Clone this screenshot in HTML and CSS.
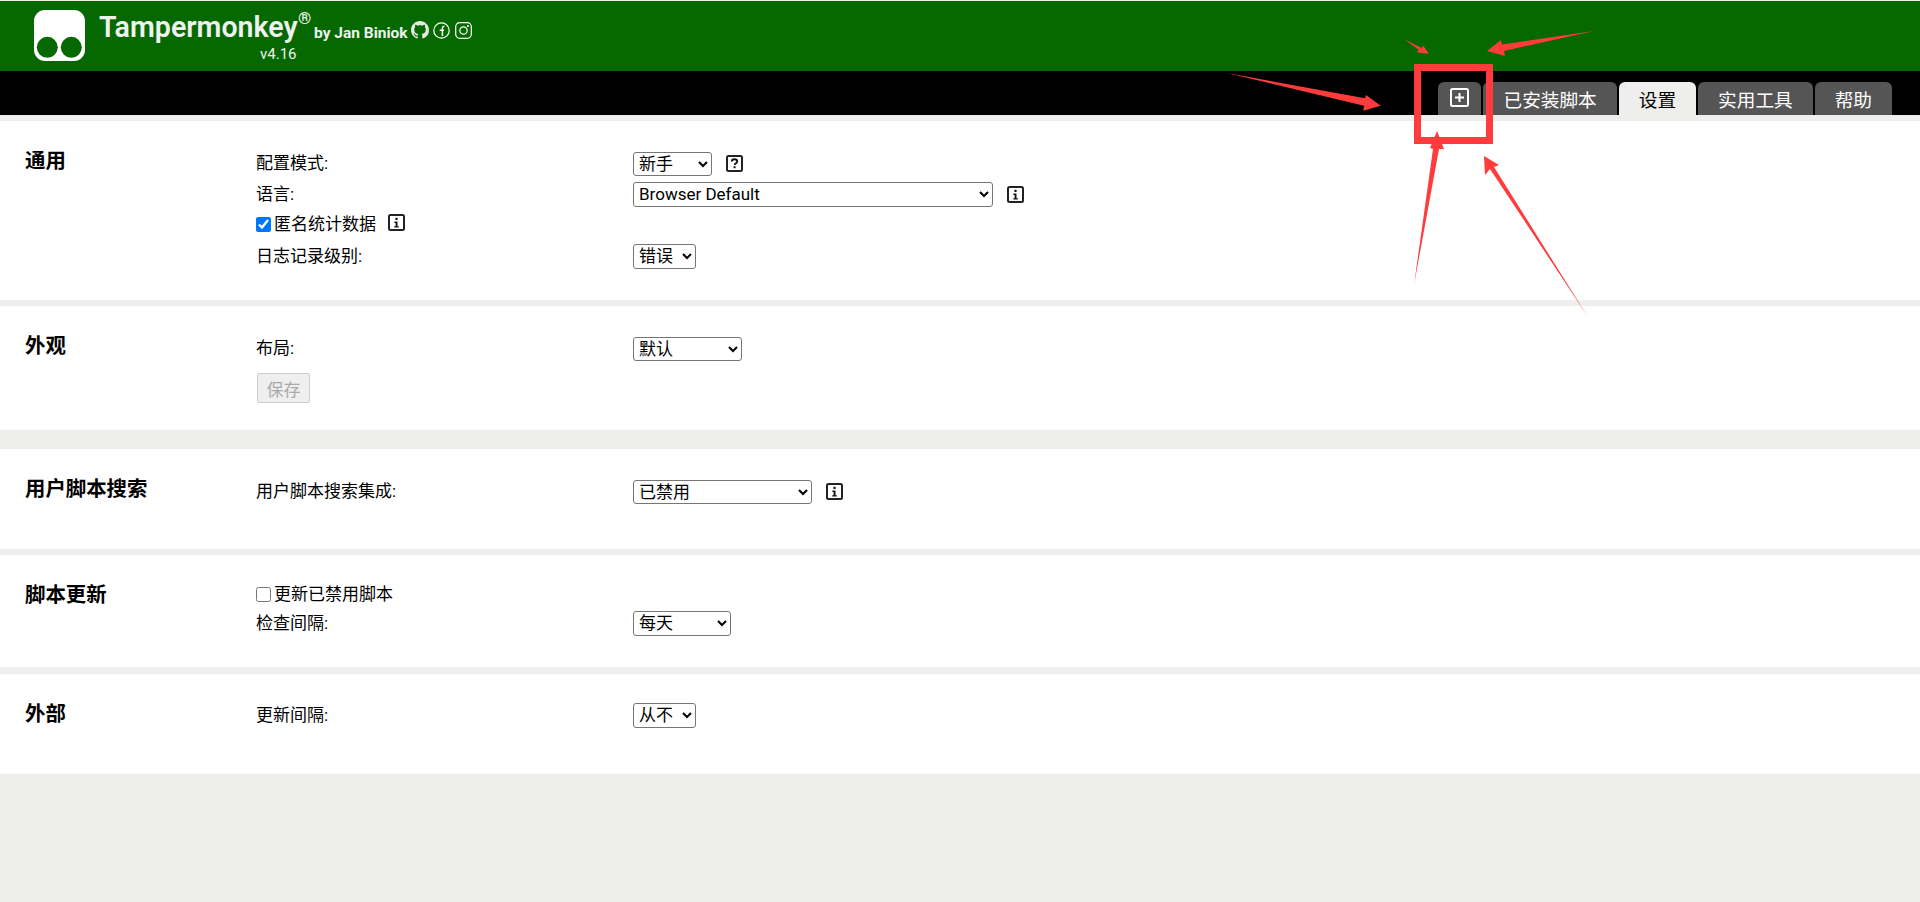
FILE: index.html
```html
<!DOCTYPE html>
<html lang="zh-CN">
<head>
<meta charset="utf-8">
<title>Tampermonkey 设置</title>
<link rel="stylesheet" href="styles.css">
</head>
<body>
<header class="brand">
  <svg class="logo" viewBox="0 0 51 51" aria-hidden="true">
    <rect width="51" height="51" rx="11" fill="#fff"/>
    <circle cx="13.3" cy="37.3" r="10.5" fill="#056800"/>
    <circle cx="37.3" cy="37.3" r="10.5" fill="#056800"/>
  </svg>
  <div class="brand-text">
    <div class="brand-line">
      <span class="brand-name">Tampermonkey<sup class="reg">®</sup></span>
      <span class="brand-by">by Jan Biniok</span>
      <svg class="social social-gh" viewBox="0 0 16 16" aria-hidden="true"><path fill="#e4e9e4" d="M8 0C3.58 0 0 3.58 0 8c0 3.54 2.29 6.53 5.47 7.59.4.07.55-.17.55-.38 0-.19-.01-.82-.01-1.49-2.01.37-2.53-.49-2.69-.94-.09-.23-.48-.94-.82-1.13-.28-.15-.68-.52-.01-.53.63-.01 1.08.58 1.23.82.72 1.21 1.87.87 2.33.66.07-.52.28-.87.51-1.07-1.78-.2-3.64-.89-3.64-3.95 0-.87.31-1.59.82-2.15-.08-.2-.36-1.02.08-2.12 0 0 .67-.21 2.2.82.64-.18 1.32-.27 2-.27.68 0 1.36.09 2 .27 1.53-1.04 2.2-.82 2.2-.82.44 1.1.16 1.92.08 2.12.51.56.82 1.27.82 2.15 0 3.07-1.87 3.75-3.65 3.95.29.25.54.73.54 1.48 0 1.07-.01 1.93-.01 2.2 0 .21.15.46.55.38A8.013 8.013 0 0016 8c0-4.42-3.58-8-8-8z"/></svg>
      <svg class="social" viewBox="0 0 17 17" aria-hidden="true"><circle cx="8.5" cy="8.5" r="7.7" fill="none" stroke="#fff" stroke-width="1.2"/><path fill="none" stroke="#fff" stroke-width="1.5" d="M9.4 14V6.5c0-1.5.7-2.2 2-2.2M6.7 8.3h4.2"/></svg>
      <svg class="social" viewBox="0 0 17 17" aria-hidden="true"><rect x=".7" y=".7" width="15.6" height="15.6" rx="4" fill="none" stroke="#fff" stroke-width="1.2"/><circle cx="8.5" cy="8.5" r="3.7" fill="none" stroke="#fff" stroke-width="1.2"/><circle cx="13" cy="4" r="1" fill="#fff"/></svg>
    </div>
    <div class="brand-version">v4.16</div>
  </div>
</header>

<nav class="tabs">
  <div class="tab tab-add">
    <svg class="add-icon" viewBox="0 0 19 19" aria-hidden="true"><rect x="1" y="1" width="17" height="17" rx="1.5" fill="none" stroke="#fff" stroke-width="2"/><path d="M9.5 5v9M5 9.5h9" stroke="#fff" stroke-width="2"/></svg>
  </div>
  <div class="tab">已安装脚本</div>
  <div class="tab tab-active">设置</div>
  <div class="tab">实用工具</div>
  <div class="tab">帮助</div>
</nav>

<main class="content">
  <section class="section">
    <h2 class="section-title">通用</h2>
    <div class="section-body">
      <div class="row">
        <label class="row-label">配置模式:</label>
        <select class="w-79 h-24"><option>新手</option></select>
        <svg class="hint" viewBox="0 0 17 17" aria-hidden="true"><rect x="1" y="1" width="15" height="15" rx="1.5" fill="none" stroke="#222" stroke-width="2"/><path d="M5.8 6.6c0-1.6 1.2-2.3 2.7-2.3s2.7.8 2.7 2.2c0 1.8-2.5 1.8-2.5 3.6" fill="none" stroke="#111" stroke-width="1.9"/><rect x="7.6" y="11.2" width="2" height="2" fill="#111"/></svg>
      </div>
      <div class="row">
        <label class="row-label">语言:</label>
        <select class="w-360"><option>Browser Default</option></select>
        <svg class="hint" viewBox="0 0 17 17" aria-hidden="true"><use href="#info"/></svg>
      </div>
      <div class="row row-check">
        <label class="check"><input type="checkbox" class="checkbox" checked>匿名统计数据</label>
        <svg class="hint hint-inline" viewBox="0 0 17 17" aria-hidden="true"><use href="#info"/></svg>
      </div>
      <div class="row">
        <label class="row-label">日志记录级别:</label>
        <select class="w-63"><option>错误</option></select>
      </div>
    </div>
  </section>

  <section class="section section-appearance">
    <h2 class="section-title">外观</h2>
    <div class="section-body">
      <div class="row">
        <label class="row-label">布局:</label>
        <select class="w-109 h-24"><option>默认</option></select>
      </div>
      <button class="save" disabled>保存</button>
    </div>
  </section>

  <section class="section">
    <h2 class="section-title">用户脚本搜索</h2>
    <div class="section-body">
      <div class="row">
        <label class="row-label">用户脚本搜索集成:</label>
        <select class="w-179 h-24"><option>已禁用</option></select>
        <svg class="hint" viewBox="0 0 17 17" aria-hidden="true"><use href="#info"/></svg>
      </div>
    </div>
  </section>

  <section class="section section-update">
    <h2 class="section-title">脚本更新</h2>
    <div class="section-body">
      <div class="row row-check row-check-first">
        <label class="check"><input type="checkbox" class="checkbox">更新已禁用脚本</label>
      </div>
      <div class="row">
        <label class="row-label">检查间隔:</label>
        <select class="w-98"><option>每天</option></select>
      </div>
    </div>
  </section>

  <section class="section">
    <h2 class="section-title">外部</h2>
    <div class="section-body body-raised">
      <div class="row">
        <label class="row-label">更新间隔:</label>
        <select class="w-63"><option>从不</option></select>
      </div>
    </div>
  </section>
</main>

<svg class="defs" width="0" height="0" aria-hidden="true">
  <symbol id="info" viewBox="0 0 17 17">
    <rect x="1" y="1" width="15" height="15" rx="1.5" fill="none" stroke="#222" stroke-width="2"/>
    <rect x="7.4" y="3.8" width="2.2" height="2.2" fill="#111"/>
    <path d="M6.4 7.6h3.1v4.6h1.3v1.3H6.3v-1.3h1.3V8.9H6.4z" fill="#111"/>
  </symbol>
</svg>

<svg class="annotations" viewBox="0 0 1920 902" aria-hidden="true">
  <rect x="1417.5" y="67.5" width="72" height="73" fill="none" stroke="#ff3b3b" stroke-width="7"/>
  <polygon fill="#ff3b3b" points="1404,39 1421.5,48 1423.3,45.7 1429,54 1416.7,52.3 1419,50"/>
  <polygon fill="#ff3b3b" points="1594,31 1502,44.5 1501,40 1487,51 1505,56 1504,51"/>
  <polygon fill="#ff3b3b" points="1227,73 1365,98.3 1366,95 1380.7,105.7 1363.3,110.7 1364,105.7"/>
  <polygon fill="#ff3b3b" points="1414,285 1433,149 1430,148 1437,131 1444,149 1439,149"/>
  <polygon fill="#ff3b3b" points="1588,317 1494,167 1499,165 1484,156 1485,175 1490,169"/>
</svg>
</body>
</html>
```
FILE: styles.css
```css
* { box-sizing: border-box; }

html, body {
  margin: 0;
  height: 902px;
  overflow: hidden;
}

body {
  position: relative;
  background: #eeeeec;
  color: #000;
  font-family: Roboto, "Noto Sans CJK SC", sans-serif;
  font-size: 17px;
}

.brand {
  display: flex;
  align-items: flex-start;
  height: 70px;
  margin-top: 1px;
  padding: 9px 0 0 34px;
  background: #056800;
  color: #eef2ee;
}

.logo {
  width: 51px;
  height: 51px;
  flex: none;
}

.brand-text {
  margin-left: 14px;
}

.brand-line {
  display: flex;
  align-items: center;
  height: 34px;
}

.brand-name {
  position: relative;
  width: 215px;
  font-size: 28.6px;
  font-weight: 600;
  line-height: 34px;
}

.reg {
  position: absolute;
  top: -2px;
  left: 199px;
  font-size: 17px;
  line-height: 20px;
}

.brand-by {
  width: 97px;
  margin-top: 11px;
  font-size: 15.5px;
  font-weight: 700;
}

.social {
  width: 17px;
  height: 17px;
  margin: 6px 5px 0 0;
  flex: none;
}

.social-gh {
  width: 18px;
  height: 18px;
  margin-right: 4px;
}

.brand-version {
  margin: 1px 0 0 161px;
  font-size: 15px;
  line-height: 18px;
}

.tabs {
  display: flex;
  justify-content: flex-end;
  align-items: flex-end;
  gap: 2px;
  height: 44px;
  padding-right: 28px;
  background: #000;
}

.tab {
  display: flex;
  align-items: center;
  justify-content: center;
  height: 33px;
  padding: 0 20px;
  border-radius: 6px 6px 0 0;
  background: #555;
  color: #fff;
  font-size: 18.67px;
}

.tab-active {
  background: #eeeeec;
  color: #000;
}

.tab-add {
  width: 43px;
  padding: 0 0 2px;
}

.add-icon {
  width: 19px;
  height: 19px;
}

.content {
  display: flex;
  flex-direction: column;
  gap: 6px;
  padding-top: 6px;
}

.section {
  display: flex;
  min-height: 100px;
  padding: 30px 0 31px 25px;
  background: #fff;
}

.section-appearance {
  padding-bottom: 27px;
  margin-bottom: 13px;
}

.section-update {
  margin-bottom: 1px;
}

.section-title {
  width: 231px;
  flex: none;
  margin: 0;
  font-size: 20.4px;
  font-weight: 700;
  line-height: 21px;
}

.section-body {
  flex: 1;
}

.body-raised {
  margin-top: -1px;
}

.row {
  display: flex;
  align-items: center;
  height: 25px;
  margin-bottom: 6px;
}

.row:last-child {
  margin-bottom: 0;
}

.row-label {
  width: 377px;
  flex: none;
  margin-top: -4px;
}

.row-check {
  height: 24px;
  margin-top: -1px;
  margin-bottom: 8px;
}

.row-check-first {
  margin-top: -3px;
  margin-bottom: 5px;
}

.check {
  display: flex;
  align-items: center;
  line-height: 22px;
}

.check .checkbox {
  margin-top: 1px;
}

.checkbox {
  width: 15px;
  height: 15px;
  margin: 0 3px 0 0;
}

select {
  height: 25px;
  padding: 0 0 2px 1px;
  border: 1px solid #767676;
  border-radius: 3px;
  background-color: #fff;
  color: #000;
  font-family: Roboto, "Noto Sans CJK SC", sans-serif;
  font-size: 17px;
}

.h-24 { height: 24px; }
.w-63 { width: 63px; }
.w-79 { width: 79px; }
.w-98 { width: 98px; }
.w-109 { width: 109px; }
.w-179 { width: 179px; }
.w-360 { width: 360px; }

.hint {
  width: 17px;
  height: 17px;
  margin-left: 14px;
  flex: none;
}

.hint-inline {
  margin: -4px 0 0 12px;
}

.save {
  display: block;
  width: 53px;
  height: 30px;
  margin: 12px 0 0 1px;
  padding: 0;
  border: 1px solid #ccc;
  border-radius: 2px;
  background: #efefef;
  color: #aaa;
  font-family: Roboto, "Noto Sans CJK SC", sans-serif;
  font-size: 17px;
}

.defs {
  position: absolute;
}

.annotations {
  position: absolute;
  top: 0;
  left: 0;
  width: 1920px;
  height: 902px;
  pointer-events: none;
}
```
